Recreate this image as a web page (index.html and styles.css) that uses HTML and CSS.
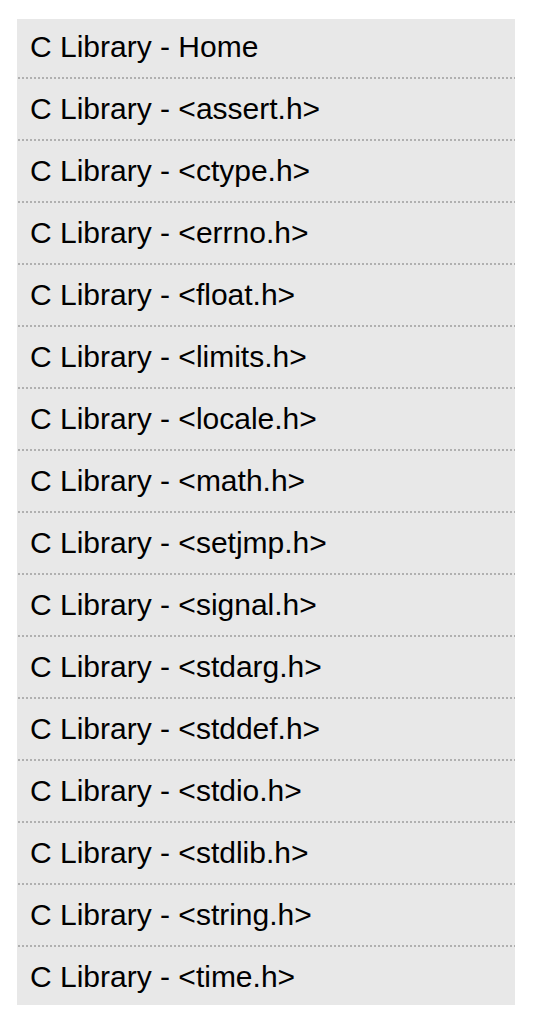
FILE: index.html
```html
<!DOCTYPE html>
<html>
    <head>
        <meta charset="UTF-8">
        <title>C Library</title>
        <link rel="stylesheet" href="styles.css">
    </head>
    <body>
        <div class="menu">
            <ul class="list">
                <li class="item">C Library - Home</li>
                <li class="item">C Library - &lt;assert.h&gt;</li>
                <li class="item">C Library - &lt;ctype.h&gt;</li>
                <li class="item">C Library - &lt;errno.h&gt;</li>
                <li class="item">C Library - &lt;float.h&gt;</li>
                <li class="item">C Library - &lt;limits.h&gt;</li>
                <li class="item">C Library - &lt;locale.h&gt;</li>
                <li class="item">C Library - &lt;math.h&gt;</li>
                <li class="item">C Library - &lt;setjmp.h&gt;</li>
                <li class="item">C Library - &lt;signal.h&gt;</li>
                <li class="item">C Library - &lt;stdarg.h&gt;</li>
                <li class="item">C Library - &lt;stddef.h&gt;</li>
                <li class="item">C Library - &lt;stdio.h&gt;</li>
                <li class="item">C Library - &lt;stdlib.h&gt;</li>
                <li class="item">C Library - &lt;string.h&gt;</li>
                <li class="item">C Library - &lt;time.h&gt;</li>
            </ul>
        </div>
    </body>
</html>
```

FILE: styles.css
```css
*{
    margin: 0;
    padding: 0;
    border: 0;
}
html,body{
    width: 100%;
    background: #fff;
}
body{
    padding: 19px 0 0 17px;
}
.menu{
    width: 498px;
    height: 986px;
    overflow: hidden;
    background-color: #e8e8e8;
}
.list{
    list-style: none;
    margin-top: -2px;
}
.item{
    box-sizing: border-box;
    height: 62px;
    line-height: 60px;
    padding-left: 13px;
    font-family: "Liberation Sans", Arial, sans-serif;
    font-size: 30px;
    color: #000;
    white-space: nowrap;
    /* dotted 2px separator */
    background-image: linear-gradient(to right, #b0b0b0 2px, transparent 2px);
    background-size: 4px 2px;
    background-repeat: repeat-x;
    background-position: 1px 60px;
}
.item:last-child{
    background-image: none;
}
```
